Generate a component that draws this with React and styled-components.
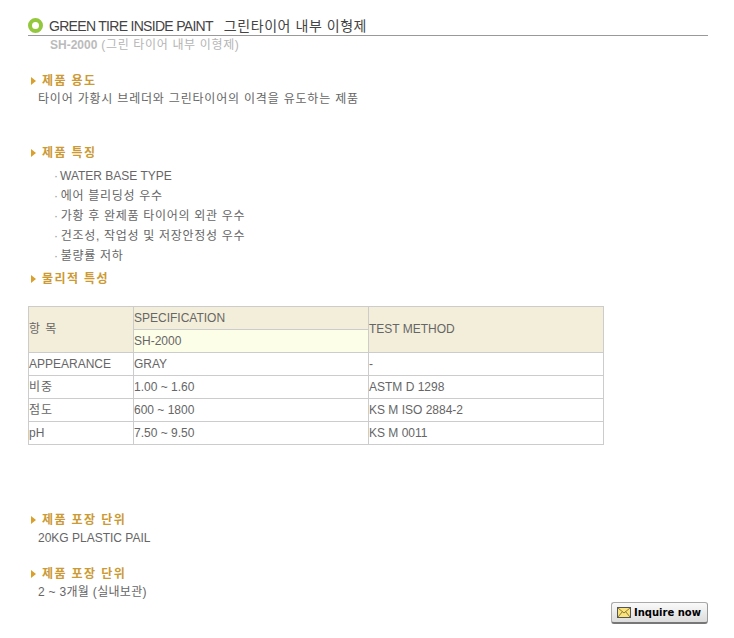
import React from "react";
import styled, { createGlobalStyle } from "styled-components";

const Global = createGlobalStyle`
  html, body { margin: 0; padding: 0; background: #fff; }
  body { font-family: "Liberation Sans", "Noto Sans CJK KR", sans-serif; font-size: 12px; color: #666; }
`;
const Page = styled.div`
  width: 734px; height: 638px; box-sizing: border-box; padding: 16px 26px 0 28px; overflow: hidden;
  display: flex; flex-direction: column;
`;
const TitleRow = styled.div`
  display: flex; align-items: center; gap: 6px; height: 19px; border-bottom: 1px solid #999;
`;
const Ring = styled.span`
  width: 15px; height: 15px; box-sizing: border-box; border: 4px solid #93c83e; border-radius: 50%; margin-top: -1px;
`;
const Title = styled.h1`
  margin: 0; font-size: 14px; font-weight: 400; color: #444; letter-spacing: -0.7px; line-height: 18px;
`;
const TitleKo = styled.span`
  margin-left: 11px; font-size: 14px; letter-spacing: 0.55px;
`;
const Sub = styled.div`
  margin: 1px 0 0 22px; font-size: 12px; line-height: 16px; color: #b5b5b5; letter-spacing: .65px;
  b { font-weight: 700; color: #bbb; letter-spacing: 0; }
`;
const Heading = styled.h2`
  margin: ${p => p.$top}px 0 0 3px; height: 16px; display: flex; align-items: center; gap: 6px;
  font-size: 12px; line-height: 16px; font-weight: 700; color: #cc9a33; letter-spacing: 1.4px;
  &::before { content: ""; border-left: 5px solid #d9a02c; border-top: 4px solid transparent; border-bottom: 4px solid transparent; }
`;
const Body = styled.p`
  margin: 2px 0 0 10px; line-height: 16px; font-size: 12px; color: #666;
  letter-spacing: ${p => p.$spacing || "0"};
`;
const List = styled.ul`
  list-style: none; margin: 5px 0 0 26px; padding: 0;
`;
const Item = styled.li`
  height: 20px; line-height: 20px; color: #666;
  letter-spacing: ${p => (p.$ko ? ".7px" : "0")};
  &::before { content: "·"; margin-right: 2px; color: #999; }
`;
const Table = styled.table`
  border-collapse: collapse; margin-top: 19px; width: 576px; table-layout: fixed; font-size: 12px; color: #666;
`;
const Cell = styled.td`
  border: 1px solid #ccc; height: 22px; padding: 0 0 ${p => (p.rowSpan > 1 ? "2px" : "0")}; line-height: 14px;
  background: ${p => p.$bg || "#fff"};
  letter-spacing: ${p => p.$spacing || "0"};
`;
const Footer = styled.div`
  display: flex; justify-content: flex-end; margin-top: 2px;
`;
const Inquire = styled.button`
  width: 97px; height: 22px; padding: 0 0 0 5px; display: flex; align-items: center; gap: 3px; box-sizing: border-box;
  border: 1px solid #aaa; border-bottom: 2px solid #777; border-right-color: #999; border-radius: 3px; white-space: nowrap;
  background: linear-gradient(#fafafa, #dcdcdc); font-family: "DejaVu Sans", sans-serif; font-size: 10px; font-weight: 700; color: #000;
`;

const Mail = () => (
  <svg width="14" height="11" viewBox="0 0 14 11">
    <rect x=".5" y=".5" width="13" height="10" fill="#fbe37c" stroke="#555" />
    <path d="M1 1l6 5 6-5M1 10l4.5-5.5M13 10L8.5 4.5" fill="none" stroke="#8a7a3a" />
  </svg>
);

const rows = [
  [["APPEARANCE"], ["GRAY"], ["-"]],
  [["비중", "1px"], ["1.00 ~ 1.60"], ["ASTM D 1298"]],
  [["점도", "1px"], ["600 ~ 1800"], ["KS M ISO 2884-2"]],
  [["pH"], ["7.50 ~ 9.50"], ["KS M 0011"]],
];
const feats = ["에어 블리딩성 우수", "가황 후 완제품 타이어의 외관 우수", "건조성, 작업성 및 저장안정성 우수", "불량률 저하"];

export default function App() {
  return (
    <Page>
      <Global />
      <TitleRow>
        <Ring />
        <Title>GREEN TIRE INSIDE PAINT<TitleKo>그린타이어 내부 이형제</TitleKo></Title>
      </TitleRow>
      <Sub><b>SH-2000</b> (그린 타이어 내부 이형제)</Sub>
      <Heading $top={20}>제품 용도</Heading>
      <Body $spacing=".8px">타이어 가황시 브레더와 그린타이어의 이격을 유도하는 제품</Body>
      <Heading $top={38}>제품 특징</Heading>
      <List>
        <Item>WATER BASE TYPE</Item>
        {feats.map(f => <Item $ko key={f}>{f}</Item>)}
      </List>
      <Heading $top={5}>물리적 특성</Heading>
      <Table>
        <colgroup><col style={{ width: 105 }} /><col style={{ width: 235 }} /><col style={{ width: 235 }} /></colgroup>
        <tbody>
          <tr>
            <Cell rowSpan={2} $bg="#f3eed9" $spacing="1px">항 목</Cell>
            <Cell $bg="#f3eed9">SPECIFICATION</Cell>
            <Cell rowSpan={2} $bg="#f3eed9">TEST METHOD</Cell>
          </tr>
          <tr><Cell $bg="#fdfee8">SH-2000</Cell></tr>
          {rows.map(r => (
            <tr key={r[0][0]}>{r.map(c => <Cell key={c[0]} $spacing={c[1]}>{c[0]}</Cell>)}</tr>
          ))}
        </tbody>
      </Table>
      <Heading $top={67}>제품 포장 단위</Heading>
      <Body>20KG PLASTIC PAIL</Body>
      <Heading $top={20}>제품 포장 단위</Heading>
      <Body $spacing=".3px">2 ~ 3개월 (실내보관)</Body>
      <Footer><Inquire><Mail />Inquire now</Inquire></Footer>
    </Page>
  );
}
